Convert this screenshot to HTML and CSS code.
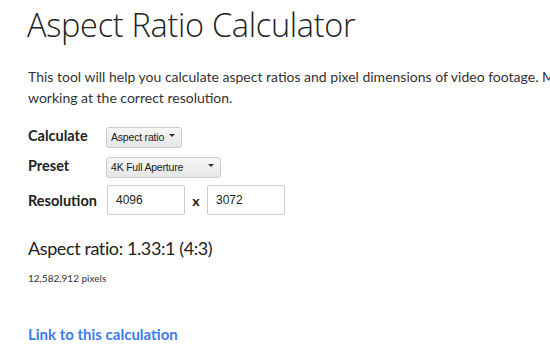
FILE: index.html
```html
<!DOCTYPE html>
<html lang="en">
<head>
  <meta charset="UTF-8" />
  <meta name="viewport" content="width=device-width, initial-scale=1.0"/>
  <title>Aspect Ratio Calculator</title>
  <link rel="stylesheet" href="styles.css">
</head>
<body>
<div class="page">
  <h1 class="title">Aspect Ratio Calculator</h1>

  <p class="intro">This tool will help you calculate aspect ratios and pixel dimensions of video footage. Make sure you are<br>working at the correct resolution.</p>

  <!-- === FORM === -->
  <div class="form">
    <div class="row">
      <label class="label">Calculate</label>
      <div class="select select-calc">
        <select>
          <option>Aspect ratio</option>
          <option>Pixel dimensions</option>
        </select>
      </div>
    </div>
    <div class="row">
      <label class="label">Preset</label>
      <div class="select select-preset">
        <select>
          <option>4K Full Aperture</option>
          <option>1080p HD</option>
        </select>
      </div>
    </div>
    <div class="row row-res">
      <label class="label">Resolution</label>
      <input class="field" type="text" value="4096" />
      <span class="times">x</span>
      <input class="field" type="text" value="3072" />
    </div>
  </div>

  <!-- === RESULT === -->
  <div class="result">
    <div class="ratio">Aspect ratio: 1.33:1 (4:3)</div>
    <div class="pixels">12,582,912 pixels</div>
  </div>

  <a class="share-link" href="#">Link to this calculation</a>
</div>
</body>
</html>
```

FILE: styles.css
```css
* {
  box-sizing: border-box;
}

body {
  margin: 0;
  font-family: Lato, 'Open Sans', sans-serif;
  background-color: #FFFFFF;
  color: #333333;
  overflow: hidden;
}

.page {
  width: 700px;
  padding: 3px 0 0 27px;
}

.title {
  margin: 0;
  font-family: 'Open Sans', sans-serif;
  font-size: 32.5px;
  font-weight: 300;
  letter-spacing: -0.3px;
  color: #222222;
  line-height: 44px;
}

.intro {
  margin: 19px 0 0 1px;
  white-space: nowrap;
  font-size: 14px;
  line-height: 21px;
}

/* ===== Form ===== */
.form {
  margin: 17px 0 0 1px;
  display: flex;
  flex-direction: column;
  gap: 9px;
}

.row {
  display: flex;
  align-items: center;
}

.label {
  width: 78px;
  font-size: 14.5px;
  font-weight: 700;
  color: #222222;
}

.select {
  position: relative;
  height: 21px;
}

.select select {
  -webkit-appearance: none;
  appearance: none;
  height: 21px;
  width: 100%;
  padding: 0 14px 0 4px;
  border: 1px solid #CCCCCC;
  border-radius: 3px;
  background: linear-gradient(#F6F6F6, #E6E6E6);
  font-family: 'Liberation Sans', Arial, sans-serif;
  font-size: 10.5px;
  letter-spacing: -0.2px;
  color: #222222;
}

.select::after {
  content: "";
  position: absolute;
  right: 7px;
  top: 9px;
  border-left: 3px solid transparent;
  border-right: 3px solid transparent;
  border-top: 3px solid #333333;
  pointer-events: none;
}

.select-calc {
  width: 76px;
}

.select-preset {
  width: 115px;
}

.row-res .label {
  width: 79px;
}

.field {
  width: 78px;
  height: 30px;
  padding: 0 8px;
  border: 1px solid #CCCCCC;
  border-radius: 2px;
  font-family: 'Liberation Sans', Arial, sans-serif;
  font-size: 12px;
  color: #222222;
}

.times {
  width: 22px;
  text-align: center;
  font-size: 14px;
  font-weight: 700;
  color: #222222;
}

/* ===== Result ===== */
.result {
  margin: 20px 0 0 1px;
}

.ratio {
  font-size: 18px;
  line-height: 26px;
  letter-spacing: -0.4px;
  color: #222222;
}

.pixels {
  margin-top: 10px;
  font-size: 10px;
  line-height: 14px;
  color: #333333;
}

.share-link {
  display: inline-block;
  margin: 40px 0 0 1px;
  font-size: 15px;
  font-weight: 700;
  color: #3B7CF0;
  text-decoration: none;
}
```
